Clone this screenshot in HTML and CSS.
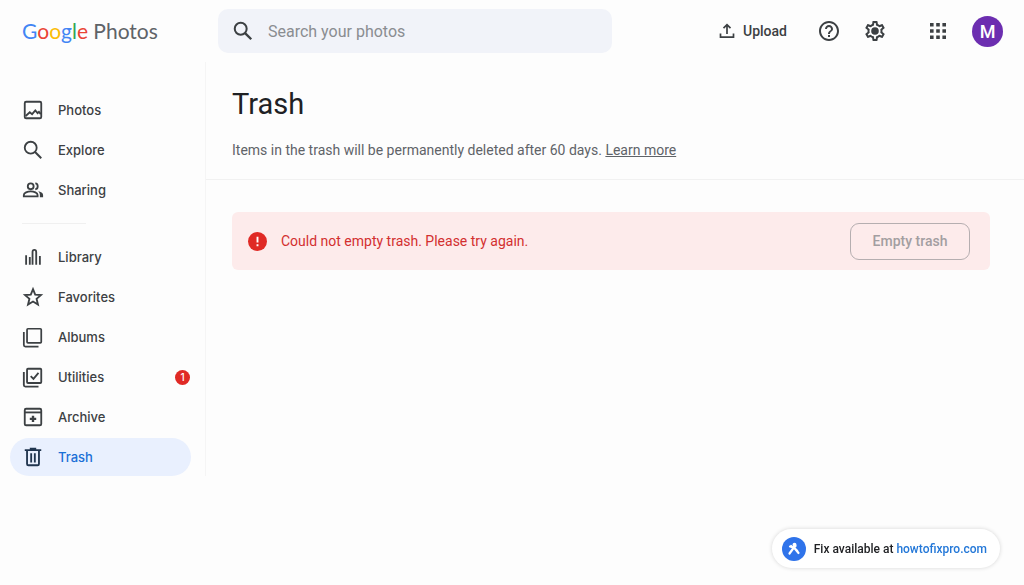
FILE: index.html
```html
<!DOCTYPE html>
<html lang="en">
  <head>
    <meta charset="UTF-8">
    <meta name="viewport" content="width=device-width, initial-scale=1.0">
    <title>Trash - Google Photos</title>
    <link rel="stylesheet" href="styles.css">
  </head>
  <body>
    <!-- Top bar -->
    <header class="topbar">
      <a class="logo" href="#"><span class="blue">G</span><span class="red">o</span><span class="yellow">o</span><span class="blue">g</span><span class="green">l</span><span class="red">e</span> Photos</a>

      <form class="search" role="search">
        <label for="search-input" aria-label="Search">
          <svg class="icon" viewBox="0 0 24 24"><circle cx="9.500" cy="9.500" r="6.500" fill="none" stroke="currentColor" stroke-width="2.200"/><path d="M14 14l7 7" stroke="currentColor" stroke-width="2.600"/></svg>
        </label>
        <input id="search-input" type="text" placeholder="Search your photos">
      </form>

      <div class="actions">
        <button class="upload" type="button">
          <svg viewBox="0 0 16 16"><path d="M8 11V2M4.500 5.200L8 1.700l3.500 3.500M1.500 10.500v3.700h13v-3.700" fill="none" stroke="currentColor" stroke-width="1.700"/></svg>
          Upload
        </button>
        <button class="icon-button" type="button" aria-label="Help">
          <svg class="icon" viewBox="0 0 24 24"><path d="M11 18h2v-2h-2v2zm1-16C6.480 2 2 6.480 2 12s4.480 10 10 10 10-4.480 10-10S17.520 2 12 2zm0 18c-4.410 0-8-3.590-8-8s3.590-8 8-8 8 3.590 8 8-3.590 8-8 8zm0-14c-2.210 0-4 1.790-4 4h2c0-1.100.9-2 2-2s2 .9 2 2c0 2-3 1.750-3 5h2c0-2.250 3-2.500 3-5 0-2.210-1.790-4-4-4z"/></svg>
        </button>
        <button class="icon-button" type="button" aria-label="Settings">
          <svg class="icon" viewBox="0 0 24 24"><path d="M19.430 12.980c.04-.32.07-.64.07-.98s-.03-.66-.07-.98l2.110-1.650c.19-.15.24-.42.12-.64l-2-3.460c-.12-.22-.39-.3-.61-.22l-2.490 1c-.52-.4-1.080-.73-1.690-.98l-.38-2.650A.49.49 0 0 0 14 2h-4c-.25 0-.46.18-.49.42l-.38 2.650c-.61.25-1.170.59-1.690.98l-2.490-1c-.23-.09-.49 0-.61.22l-2 3.460c-.13.22-.07.49.12.64l2.110 1.650c-.04.32-.07.65-.07.98s.03.66.07.98l-2.110 1.650c-.19.15-.24.42-.12.64l2 3.460c.12.22.39.3.61.22l2.490-1c.52.4 1.080.73 1.690.98l.38 2.650c.03.24.24.42.49.42h4c.25 0 .46-.18.49-.42l.38-2.650c.61-.25 1.170-.59 1.690-.98l2.490 1c.23.09.49 0 .61-.22l2-3.460c.12-.22.07-.49-.12-.64l-2.110-1.650zm-1.980-1.710c.04.31.05.52.05.73s-.02.43-.05.73l-.14 1.130.89.7 1.080.84-.7 1.210-1.270-.51-1.040-.42-.9.68c-.43.32-.84.56-1.250.73l-1.060.43-.16 1.130-.2 1.350h-1.400l-.19-1.350-.16-1.130-1.060-.43c-.43-.18-.83-.41-1.230-.71l-.91-.7-1.060.43-1.270.51-.7-1.210 1.080-.84.89-.7-.14-1.130c-.03-.31-.05-.54-.05-.74s.02-.43.05-.73l.14-1.130-.89-.7-1.080-.84.7-1.210 1.270.51 1.040.42.9-.68c.43-.32.84-.56 1.250-.73l1.060-.43.16-1.130.2-1.350h1.390l.19 1.350.16 1.130 1.060.43c.43.18.83.41 1.230.71l.91.7 1.060-.43 1.270-.51.7 1.210-1.070.85-.89.7.14 1.130z"/><circle cx="12" cy="12" r="3.800"/></svg>
        </button>
        <button class="icon-button apps" type="button" aria-label="Google apps">
          <svg class="icon" viewBox="0 0 24 24"><path d="M4 4h3.600v3.600H4zM10.200 4h3.600v3.600h-3.600zM16.400 4H20v3.600h-3.600zM4 10.200h3.600v3.600H4zM10.200 10.200h3.600v3.600h-3.600zM16.400 10.200H20v3.600h-3.600zM4 16.400h3.600V20H4zM10.200 16.400h3.600V20h-3.600zM16.400 16.400H20V20h-3.600z"/></svg>
        </button>
        <button class="avatar" type="button">M</button>
      </div>
    </header>

    <div class="layout">
      <!-- Sidebar -->
      <nav class="sidebar">
        <a class="nav-item" href="#">
          <svg class="icon" viewBox="0 0 24 24"><rect x="3" y="3" width="18" height="18" rx="1.500" fill="none" stroke="currentColor" stroke-width="2"/><path d="M4 18.500l4.500-4 2.500 2 3.500-4 2.500 3 1.500-1.500 2 2.500" fill="none" stroke="currentColor" stroke-width="2"/></svg>
          Photos
        </a>
        <a class="nav-item" href="#">
          <svg class="icon" viewBox="0 0 24 24"><circle cx="9.500" cy="9.500" r="6.500" fill="none" stroke="currentColor" stroke-width="2"/><path d="M14 14l7 7" stroke="currentColor" stroke-width="2.200"/></svg>
          Explore
        </a>
        <a class="nav-item" href="#">
          <svg class="icon" viewBox="0 0 24 24"><g fill="none" stroke="currentColor" stroke-width="2"><circle cx="9.500" cy="8" r="3.200"/><path d="M2 19v-1.500c0-2.500 4-4 7.500-4s7.500 1.500 7.500 4V19z"/><path d="M14.500 4.800c3.500 0 3.500 6.400 0 6.400"/></g><path d="M17.500 13.200c3 .8 5.500 2 5.500 4.300V20h-3.500v-2.500c0-1.700-.7-3.200-2-4.300z"/></svg>
          Sharing
        </a>
        <hr>
        <a class="nav-item" href="#">
          <svg class="icon" viewBox="0 0 24 24"><path d="M4.500 10v10.500M8.500 12v8.500M11.500 20.500V6.500c0-3 4-3 4 0v14M19.500 11v9.500" fill="none" stroke="currentColor" stroke-width="2"/></svg>
          Library
        </a>
        <a class="nav-item" href="#">
          <svg class="icon" viewBox="0 0 24 24"><path d="M12 3.500l2.400 5.900 6.300.5-4.800 4.100 1.500 6.200-5.400-3.300-5.400 3.300L8.100 14 3.300 9.900l6.300-.5z" fill="none" stroke="currentColor" stroke-width="2"/></svg>
          Favorites
        </a>
        <a class="nav-item" href="#">
          <svg class="icon" viewBox="0 0 24 24"><g fill="none" stroke="currentColor" stroke-width="1.900"><rect x="5.500" y="3" width="15.500" height="15.500" rx="1"/><path d="M2 6.500v14.300c0 .9.600 1.700 1.700 1.700H18"/></g></svg>
          Albums
        </a>
        <a class="nav-item" href="#">
          <svg class="icon" viewBox="0 0 24 24"><g fill="none" stroke="currentColor" stroke-width="2"><rect x="5.500" y="3" width="15.500" height="15.500" rx="1"/><path d="M2 6.500v14.300c0 .9.600 1.700 1.700 1.700H18M9.500 11l3 3L18 7.500"/></g></svg>
          Utilities
          <span class="badge">1</span>
        </a>
        <a class="nav-item" href="#">
          <svg class="icon" viewBox="0 0 24 24"><g fill="none" stroke="currentColor" stroke-width="2"><rect x="3" y="3" width="18" height="18" rx="1.500"/><path d="M3 7h18"/><path d="M12 10.500v7M8.500 14h7" stroke-width="2.600"/></g></svg>
          Archive
        </a>
        <a class="nav-item active" href="#" aria-current="page">
          <svg class="icon" viewBox="0 0 24 24"><path d="M3 4.500h18M8.500 3h7M5.500 5v14.500c0 .9.600 1.500 1.500 1.500h10c.9 0 1.500-.6 1.500-1.500V5M10 8v10M14 8v10" fill="none" stroke="currentColor" stroke-width="2"/></svg>
          Trash
        </a>
      </nav>

      <!-- Trash page -->
      <main class="content">
        <div class="page-head">
          <h1>Trash</h1>
          <p>Items in the trash will be permanently deleted after 60 days. <a href="#">Learn more</a></p>
        </div>
        <div class="alert" role="alert">
          <svg class="alert-icon" viewBox="0 0 20 20"><circle cx="10" cy="10" r="10" fill="#e02a25"/><path d="M10 5v6M10 13v2" stroke="#fff" stroke-width="2"/></svg>
          <span>Could not empty trash. Please try again.</span>
          <button class="empty-button" type="button">Empty trash</button>
        </div>
      </main>
    </div>

    <!-- Floating note -->
    <div class="fix-note">
      <svg viewBox="0 0 24 24"><circle cx="12" cy="12" r="12" fill="#2f73ea"/><g fill="none" stroke="#fff" stroke-linecap="round"><path d="M11.500 11L7.500 16.500M12 10.500l4.500 5.500" stroke-width="2.200"/><path d="M8 9.500l3.500 1 2-1.500" stroke-width="2.200"/><path d="M15.500 13.500L9 8.500" stroke-width="1.500"/></g><circle cx="12.500" cy="7.800" r="2" fill="#fff"/></svg>
      <span>Fix available at <a href="#">howtofixpro.com</a></span>
    </div>
  </body>
</html>
```
FILE: styles.css
```css
* {
  box-sizing: border-box;
}

body {
  margin: 0;
  background: #fdfdfd;
  color: #3c4043;
  font-family: Roboto, Arial, sans-serif;
  font-size: 14px;
}

button {
  padding: 0;
  border: none;
  background: none;
  color: inherit;
  font-family: inherit;
  cursor: pointer;
}

a {
  color: inherit;
  text-decoration: none;
}

.icon {
  display: block;
  flex: none;
  width: 22px;
  height: 22px;
  fill: currentColor;
}

/* Top bar */
.topbar {
  display: flex;
  align-items: center;
  height: 62px;
  padding-right: 21px;
}

.logo {
  flex: none;
  width: 218px;
  padding: 0 0 2px 22px;
  color: #5f6368;
  font-family: Lato, sans-serif;
  font-size: 21px;
}

.blue {
  color: #4285f4;
}

.red {
  color: #ea4335;
}

.yellow {
  color: #fbbc05;
}

.green {
  color: #34a853;
}

.search {
  display: flex;
  flex: 0 1 394px;
  align-items: center;
  gap: 14px;
  height: 44px;
  padding: 0 14px;
  border-radius: 10px;
  background: #f1f3f9;
}

.search input {
  flex: 1;
  min-width: 0;
  padding: 0;
  border: none;
  outline: none;
  background: none;
  color: #3c4043;
  font-family: inherit;
  font-size: 16px;
}

.search input::placeholder {
  color: #8a8d91;
}

.actions {
  display: flex;
  align-items: center;
  margin-left: auto;
}

.upload {
  display: flex;
  align-items: center;
  gap: 8px;
  margin-right: 30px;
  font-size: 14px;
  font-weight: 500;
}

.upload svg {
  width: 16px;
  height: 16px;
}

.icon-button {
  margin-right: 22px;
}

.icon-button .icon {
  width: 24px;
  height: 24px;
}

.icon-button.apps {
  margin: 0 22px 0 17px;
}

.avatar {
  width: 31px;
  height: 31px;
  border-radius: 50%;
  background: #6c2eb0;
  color: #fff;
  font-size: 18px;
  font-weight: 500;
}

.layout {
  display: flex;
}

/* Sidebar */
.sidebar {
  display: flex;
  flex: none;
  flex-direction: column;
  gap: 2px;
  width: 206px;
  padding: 29px 14px 0 10px;
  border-right: 1px solid #f5f5f5;
}

.nav-item {
  display: flex;
  align-items: center;
  gap: 14px;
  height: 38px;
  padding: 0 1px 0 12px;
  border-radius: 19px;
  font-family: Inter, Arial, sans-serif;
  font-size: 13px;
  font-weight: 500;
}

.nav-item.active {
  background: #e9f0fe;
  color: #1a6fd6;
}

.nav-item.active .icon {
  color: #20354f;
}

.sidebar hr {
  width: 64px;
  margin: 12px;
  border: none;
  border-top: 1px solid #f0f0f0;
}

.badge {
  width: 15px;
  height: 15px;
  margin-left: auto;
  border-radius: 50%;
  background: #e02a25;
  color: #fff;
  font-size: 10px;
  line-height: 15px;
  text-align: center;
}

/* Trash page */
.content {
  flex: 1;
}

.page-head {
  padding: 24px 26px 19px;
  border-bottom: 1px solid #f1f1f1;
}

.page-head h1 {
  margin: 0;
  color: #202124;
  font-size: 29px;
  font-weight: 400;
  line-height: 36px;
}

.page-head p {
  margin: 18px 0 0;
  color: #5f6368;
  line-height: 20px;
}

.page-head a {
  text-decoration: underline;
}

.alert {
  display: flex;
  align-items: center;
  gap: 14px;
  min-height: 58px;
  margin: 32px 34px 0 26px;
  padding: 0 20px 0 16px;
  border-radius: 6px;
  background: #fdebeb;
  color: #d32f2f;
}

.alert-icon {
  flex: none;
  width: 19px;
  height: 19px;
}

.empty-button {
  width: 120px;
  height: 37px;
  margin-left: auto;
  border: 1px solid #b5aeb0;
  border-radius: 9px;
  color: #a39ea1;
  font-size: 14px;
  font-weight: 500;
}

/* Floating note */
.fix-note {
  position: fixed;
  right: 24px;
  bottom: 17px;
  display: flex;
  align-items: center;
  gap: 8px;
  height: 39px;
  padding: 0 13px 0 10px;
  border-radius: 20px;
  background: #fff;
  box-shadow: 0 0 4px rgba(0, 0, 0, 0.16);
  color: #202124;
  font-size: 12px;
  font-weight: 500;
}

.fix-note svg {
  width: 24px;
  height: 24px;
}

.fix-note a {
  color: #2478d8;
}
```
